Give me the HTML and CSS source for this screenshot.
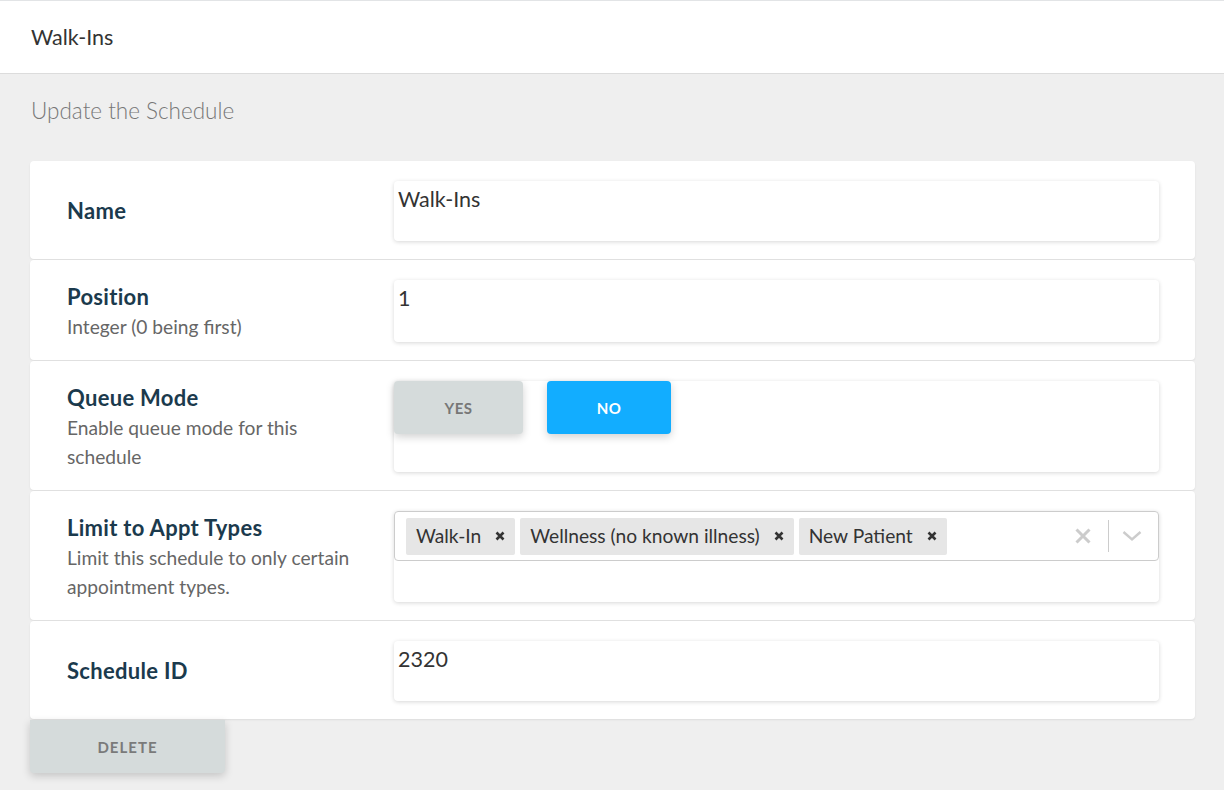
FILE: index.html
```html
<!DOCTYPE html>
<html>
<head>
<meta charset="utf-8">
<link rel="stylesheet" href="styles.css">
</head>
<body>
<header class="topbar">Walk-Ins</header>
<div class="subtitle">Update the Schedule</div>
<main class="main">
  <section class="row">
    <div class="label"><div class="title">Name</div></div>
    <div class="field"><div class="input">Walk-Ins</div></div>
  </section>
  <section class="row">
    <div class="label"><div class="title">Position</div><div class="desc">Integer (0 being first)</div></div>
    <div class="field"><div class="input">1</div></div>
  </section>
  <section class="row">
    <div class="label"><div class="title">Queue Mode</div><div class="desc">Enable queue mode for this schedule</div></div>
    <div class="field"><div class="input input-btns">
      <button class="btn btn-yes">YES</button>
      <button class="btn btn-no">NO</button>
    </div></div>
  </section>
  <section class="row">
    <div class="label"><div class="title">Limit to Appt Types</div><div class="desc">Limit this schedule to only certain appointment types.</div></div>
    <div class="field"><div class="input input-select">
      <div class="select">
        <div class="tags">
          <span class="tag">Walk-In<svg class="tag-x" width="10" height="10" viewBox="0 0 10 10"><path d="M1.5 1.5 L8.5 8.5 M8.5 1.5 L1.5 8.5" stroke="#333" stroke-width="2.6"/></svg></span>
          <span class="tag">Wellness (no known illness)<svg class="tag-x" width="10" height="10" viewBox="0 0 10 10"><path d="M1.5 1.5 L8.5 8.5 M8.5 1.5 L1.5 8.5" stroke="#333" stroke-width="2.6"/></svg></span>
          <span class="tag">New Patient<svg class="tag-x" width="10" height="10" viewBox="0 0 10 10"><path d="M1.5 1.5 L8.5 8.5 M8.5 1.5 L1.5 8.5" stroke="#333" stroke-width="2.6"/></svg></span>
        </div>
        <div class="indicators">
          <svg class="clear" width="16" height="16" viewBox="0 0 16 16"><path d="M1.5 1.5 L14.5 14.5 M14.5 1.5 L1.5 14.5" stroke="#cccccc" stroke-width="3"/></svg>
          <span class="sep"></span>
          <svg class="chev" width="20" height="20" viewBox="0 0 20 20"><path d="M1.5 6 L10 13.5 L18.5 6" fill="none" stroke="#cccccc" stroke-width="2.4"/></svg>
        </div>
      </div>
    </div></div>
  </section>
  <section class="row">
    <div class="label"><div class="title">Schedule ID</div></div>
    <div class="field"><div class="input">2320</div></div>
  </section>
  <button class="btn btn-delete">DELETE</button>
</main>
</body>
</html>
```
FILE: styles.css
```css
* { box-sizing: border-box; }
html, body { margin: 0; padding: 0; }
body {
  background: #efefef;
  font-family: Lato, "Open Sans", sans-serif;
  color: #333;
  height: 790px;
  overflow: hidden;
}
.topbar {
  height: 74px;
  background: #fff;
  border-top: 1px solid #e2e4e6;
  border-bottom: 1px solid #dcdcdc;
  display: flex;
  align-items: center;
  padding-left: 31px;
  font-size: 21.5px;
  color: #333;
}
.subtitle {
  padding: 22px 31px 35px;
  font-size: 22.5px;
  line-height: 30px;
  font-weight: 300;
  color: #777;
}
.main {
  padding: 0 29px 0 30px;
  display: flex;
  flex-direction: column;
  gap: 1px;
  align-items: flex-start;
}
.row {
  width: 100%;
  background: #fff;
  border-radius: 4px;
  box-shadow: 0 1px 2px rgba(0,0,0,0.08);
  display: flex;
  padding: 20px 36px 18px 37px;
}
.label {
  width: 327px;
  flex: none;
  display: flex;
  flex-direction: column;
  justify-content: center;
  padding: 1.5px 0;
}
.title {
  font-size: 22px;
  line-height: 30px;
  font-weight: 700;
  letter-spacing: 0.3px;
  color: #1b3a4d;
}
.desc {
  font-size: 19.2px;
  line-height: 29px;
  color: #666;
  padding-right: 20px;
}
.field {
  flex: 1;
  display: flex;
}
.input {
  flex: 1;
  min-height: 60px;
  background: #fff;
  border-radius: 4px;
  box-shadow: 0 1px 4px rgba(0,0,0,0.16);
  padding: 6px 4px;
  font-size: 21.5px;
  line-height: 24px;
  color: #333;
}
.input-btns {
  padding: 0;
  display: flex;
  align-items: flex-start;
  gap: 24px;
}
.btn {
  border: none;
  font-family: inherit;
  font-weight: 700;
  font-size: 15px;
  letter-spacing: 0.5px;
  height: 53px;
  border-radius: 4px;
  box-shadow: 0 3px 8px rgba(0,0,0,0.18);
  cursor: pointer;
}
.btn-yes {
  width: 129px;
  background: #d5dbdb;
  color: #777;
}
.btn-no {
  width: 124px;
  background: #12adff;
  color: #fff;
}
.input-select {
  padding: 0;
}
.select {
  height: 50px;
  border: 1px solid #cccccc;
  border-radius: 4px;
  display: flex;
  align-items: center;
  padding: 0 16px 0 11px;
}
.tags {
  flex: 1;
  display: flex;
  gap: 5px;
}
.tag {
  display: inline-flex;
  align-items: center;
  height: 37px;
  background: #e6e6e6;
  border-radius: 2px;
  padding: 0 10px 0 10px;
  font-size: 19.2px;
  color: #333;
}
.tag-x {
  margin-left: 14px;
}
.indicators {
  display: flex;
  align-items: center;
}
.clear { margin-right: 17px; }
.sep {
  width: 1px;
  height: 32px;
  background: #cccccc;
  margin-right: 13px;
}
.btn-delete {
  width: 195px;
  background: #d5dbdb;
  color: #7a7a7a;
  letter-spacing: 1px;
  border-radius: 0 0 4px 4px;
}
```
